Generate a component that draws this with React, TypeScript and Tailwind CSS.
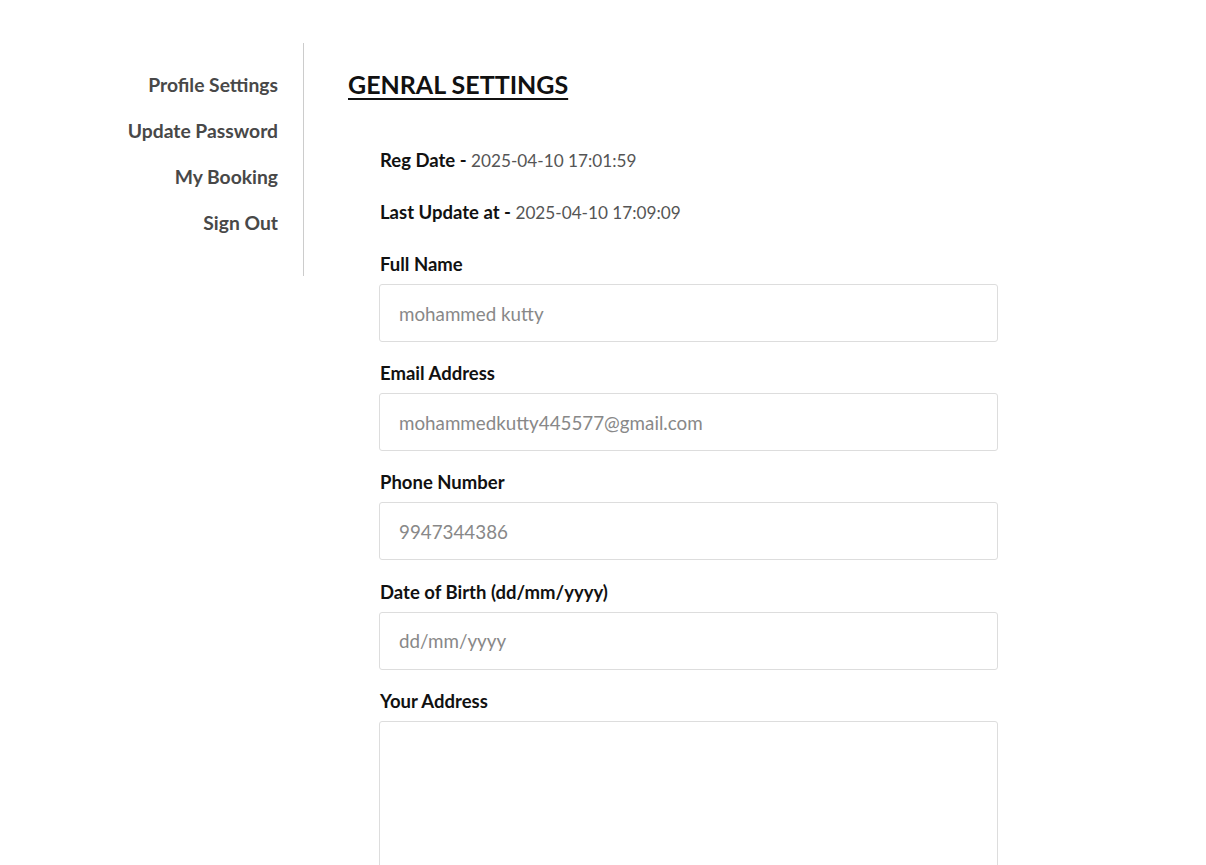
import React from 'react';

const fields = [
  { label: 'Full Name', placeholder: 'mohammed kutty' },
  { label: 'Email Address', placeholder: 'mohammedkutty445577@gmail.com' },
  { label: 'Phone Number', placeholder: '9947344386' },
  { label: 'Date of Birth (dd/mm/yyyy)', placeholder: 'dd/mm/yyyy' },
];

const App: React.FC = () => (
  <div className="min-h-screen bg-white pt-[43px] font-['Lato',sans-serif] text-[#111]">
    <div className="flex items-start">
      <aside className="w-[304px] shrink-0 border-r border-[#ccc] pt-[30px] pb-[41px] pr-[25px] text-right">
        <ul className="flex flex-col gap-[22px]">
          {['Profile Settings', 'Update Password', 'My Booking', 'Sign Out'].map((item) => (
            <li key={item} className="h-[24px]">
              <a href="#" className="block text-[19.3px] leading-[24px] font-bold text-[#484848]">
                {item}
              </a>
            </li>
          ))}
        </ul>
      </aside>
      <main className="pl-[44px] pt-[25px]">
        <h2 className="text-[25px] leading-[32px] font-bold underline underline-offset-[4px] decoration-2 text-[#111]">
          GENRAL SETTINGS
        </h2>
        <div className="pl-[32px] pt-[47px] w-[651px]">
          <p className="text-[18.5px] leading-[27px] mb-[25px]">
            <span className="font-bold">Reg Date - </span>
            <span className="text-[#555] text-[17.2px]">2025-04-10 17:01:59</span>
          </p>
          <p className="text-[18.5px] leading-[27px] mb-[25px]">
            <span className="font-bold">Last Update at - </span>
            <span className="text-[#555] text-[17.2px]">2025-04-10 17:09:09</span>
          </p>
          {fields.map(({ label, placeholder }) => (
            <div key={label} className="mb-[18.2px]">
              <label className="block text-[18.5px] leading-[27px] font-bold mb-[6px]">{label}</label>
              <input
                type="text"
                placeholder={placeholder}
                className="block w-[619px] h-[58px] -ml-px px-[19px] border border-[#ddd] rounded-[3px] text-[18.8px] placeholder:text-[#888] outline-none"
              />
            </div>
          ))}
          <div>
            <label className="block text-[18.5px] leading-[27px] font-bold mb-[6px]">Your Address</label>
            <textarea className="block w-[619px] h-[160px] -ml-px px-[19px] py-[12px] border border-[#ddd] rounded-[3px] text-[18.8px] outline-none" />
          </div>
        </div>
      </main>
    </div>
  </div>
);

export default App;
